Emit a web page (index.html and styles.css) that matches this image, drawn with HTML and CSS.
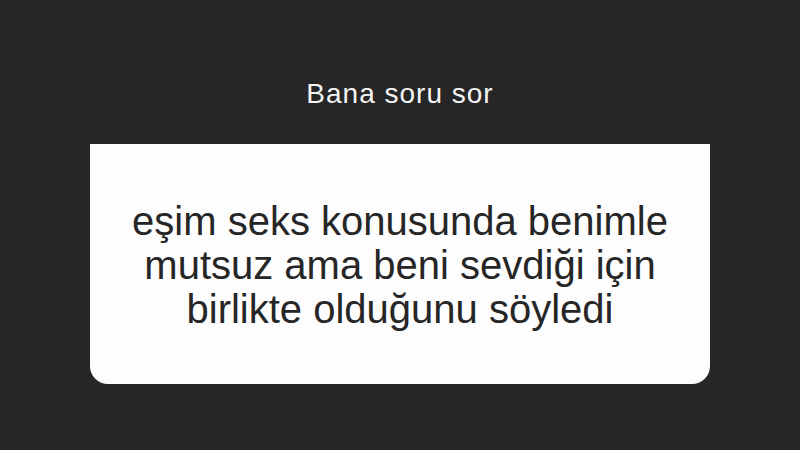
FILE: index.html
```html
<!DOCTYPE html>
<html lang="tr">
<head>
    <meta charset="UTF-8">
    <meta name="viewport" content="width=device-width, initial-scale=1.0">
    <title>Bana soru sor</title>
    <link rel="stylesheet" href="styles.css">
</head>
<body>
    <div class="story">
        <p class="prompt">Bana soru sor</p>
        <div class="answer">
            <p>eşim seks konusunda benimle<br>
            mutsuz ama beni sevdiği için<br>
            birlikte olduğunu söyledi</p>
        </div>
    </div>
</body>
</html>
```
FILE: styles.css
```css
*{
    margin: 0;
    padding: 0;
    box-sizing: border-box;
}
body{
    background-color: #262626;
    font-family: 'Liberation Sans', Arial, sans-serif;
}
.story{
    width: 800px;
    height: 450px;
    display: flex;
    flex-direction: column;
    align-items: center;
    padding-top: 78px;
}
.prompt{
    color: #f4f4f4;
    font-size: 28px;
    line-height: 32px;
    letter-spacing: 1px;
    margin-bottom: 34px;
}
.answer{
    width: 620px;
    height: 240px;
    background-color: #fdfdfd;
    border-radius: 0 0 18px 18px;
    display: flex;
    align-items: center;
    justify-content: center;
    padding-top: 2px;
}
.answer p{
    color: #262626;
    font-size: 40px;
    line-height: 44px;
    text-align: center;
}
```
